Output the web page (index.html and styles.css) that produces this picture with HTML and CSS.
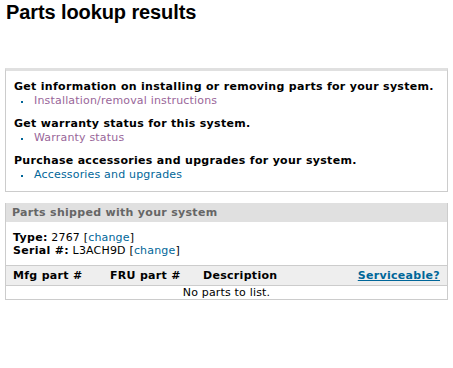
FILE: index.html
```html
<!DOCTYPE html>
<html>
<head>
<meta charset="utf-8">
<link rel="stylesheet" href="styles.css">
</head>
<body>
<h1 class="title">Parts lookup results</h1>
<div class="box info">
  <div class="group">
    <div class="lead">Get information on installing or removing parts for your system.</div>
    <div class="item"><span class="dot"></span><a class="visited" href="#">Installation/removal instructions</a></div>
  </div>
  <div class="group">
    <div class="lead">Get warranty status for this system.</div>
    <div class="item"><span class="dot"></span><a class="visited" href="#">Warranty status</a></div>
  </div>
  <div class="group">
    <div class="lead">Purchase accessories and upgrades for your system.</div>
    <div class="item"><span class="dot"></span><a class="link" href="#">Accessories and upgrades</a></div>
  </div>
</div>
<div class="box parts">
  <div class="phead">Parts shipped with your system</div>
  <div class="sys">
    <div><b>Type:</b> 2767 [<a class="link" href="#">change</a>]</div>
    <div><b>Serial #:</b> L3ACH9D [<a class="link" href="#">change</a>]</div>
  </div>
  <div class="thead">
    <span class="c1">Mfg part #</span>
    <span class="c2">FRU part #</span>
    <span class="c3">Description</span>
    <a class="c4" href="#">Serviceable?</a>
  </div>
  <div class="empty">No parts to list.</div>
</div>
</body>
</html>
```

FILE: styles.css
```css
body {
  margin: 0;
  font-family: "DejaVu Sans", Verdana, sans-serif;
  font-size: 11px;
  letter-spacing: 0.18px;
  color: #000;
  background: #fff;
}
b { letter-spacing: 0.3px; }
.title {
  font-family: "Liberation Sans", Arial, sans-serif;
  font-size: 20px;
  font-weight: bold;
  letter-spacing: -0.1px;
  margin: 0;
  padding: 0 0 0 6px;
  line-height: 24px;
  height: 68px;
}
.box {
  width: 441px;
  margin-left: 5px;
  border: 1px solid #cccccc;
}
.info {
  border-top: 3px solid #e0e0e0;
  padding: 9px 0 9px 0;
}
.group {
  padding-left: 8px;
  margin-bottom: 9px;
}
.group:last-child { margin-bottom: 0; }
.lead {
  font-weight: bold;
  letter-spacing: 0.3px;
  line-height: 14px;
}
.item {
  line-height: 14px;
  display: flex;
  align-items: center;
}
.dot {
  display: inline-block;
  width: 2px;
  height: 2px;
  background: #006699;
  margin: 1px 11px 0 7px;
}
a { text-decoration: none; }
.visited { color: #996699; }
.link { color: #006699; }
.parts {
  margin-top: 11px;
  border-top: none;
}
.phead {
  background: #e0e0e0;
  color: #666666;
  font-weight: bold;
  letter-spacing: 0.3px;
  line-height: 19px;
  padding-left: 6px;
}
.sys {
  padding: 9px 7px 8px 7px;
  line-height: 13px;
}
.thead {
  display: flex;
  background: #eeeeee;
  border-top: 1px solid #cccccc;
  border-bottom: 1px solid #cccccc;
  font-weight: bold;
  letter-spacing: 0.3px;
  line-height: 19px;
  padding: 0 7px 0 7px;
}
.c1 { width: 97px; }
.c2 { width: 93px; }
.c3 { flex: 1; }
.c4 { color: #006699; text-decoration: underline; }
.empty {
  text-align: center;
  line-height: 13px;
}
```
